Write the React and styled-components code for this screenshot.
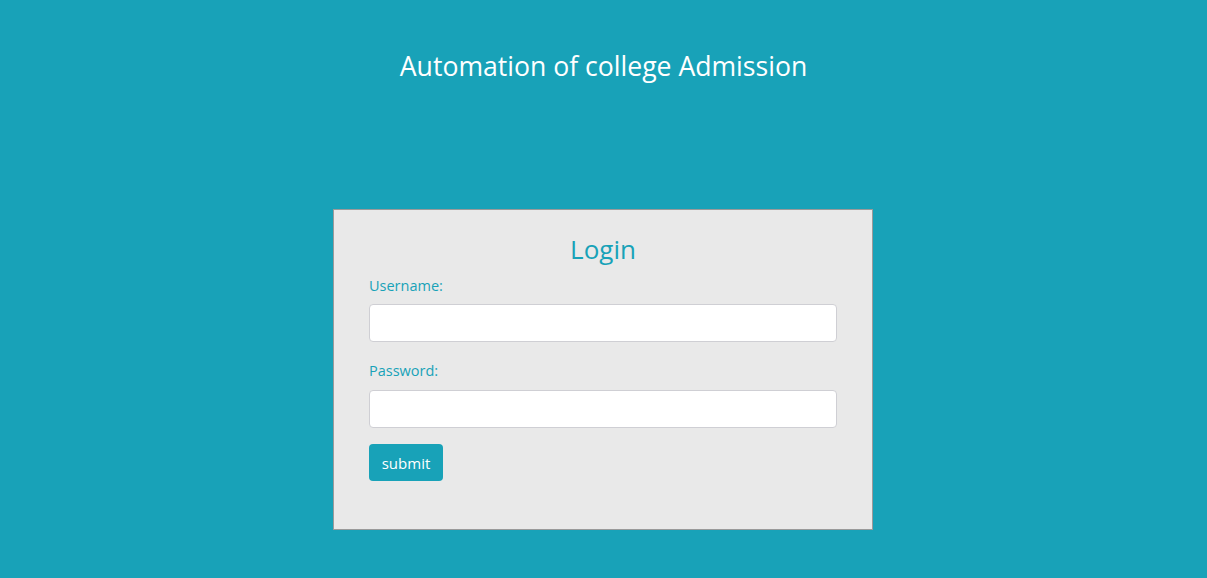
import styled, { createGlobalStyle } from 'styled-components';

const GlobalStyle = createGlobalStyle`
  html, body {
    margin: 0;
    padding: 0;
    background-color: #18a2b8;
    font-family: "Open Sans", "Noto Sans", sans-serif;
  }
`;

const Page = styled.main`
  min-height: 578px;
  display: flex;
  flex-direction: column;
  align-items: center;
`;

const Title = styled.h1`
  margin: 48px 0 0;
  font-size: 26.6px;
  font-weight: 400;
  line-height: 36px;
  color: #ffffff;
`;

const Card = styled.section`
  box-sizing: border-box;
  width: 540px;
  margin-top: 125px;
  margin-right: 1px;
  padding: 23px 35px 48px;
  background-color: #e9e9e9;
  border: 1px solid #9a9a9a;
  display: flex;
  flex-direction: column;
`;

const CardTitle = styled.h2`
  margin: 0 0 11px;
  text-align: center;
  font-size: 26px;
  font-weight: 400;
  line-height: 32px;
  color: #18a2b8;
`;

const Label = styled.label`
  font-size: 14.5px;
  line-height: 20px;
  color: #18a2b8;
  margin-bottom: ${(props) => props.gap || 8}px;
`;

const Input = styled.input`
  box-sizing: border-box;
  width: 100%;
  height: 38px;
  padding: 6px 12px;
  background: #ffffff;
  border: 1px solid #cfcfd4;
  border-radius: 4px;
  font-size: 15px;
  margin-bottom: ${(props) => props.after || 19}px;
  outline: none;
`;

const SubmitButton = styled.button`
  align-self: flex-start;
  width: 74px;
  height: 37px;
  padding: 0;
  border: none;
  border-radius: 4px;
  background-color: #18a2b8;
  color: #ffffff;
  font-family: "Open Sans", "Noto Sans", sans-serif;
  font-size: 15px;
  cursor: pointer;
`;

export default function App() {
  return (
    <>
      <GlobalStyle />
      <Page>
        <Title>Automation of college Admission</Title>
        <Card>
          <CardTitle>Login</CardTitle>
          <Label htmlFor="username">Username:</Label>
          <Input id="username" type="text" />
          <Label htmlFor="password" gap={9}>Password:</Label>
          <Input id="password" type="password" after={16} />
          <SubmitButton type="submit">submit</SubmitButton>
        </Card>
      </Page>
    </>
  );
}
